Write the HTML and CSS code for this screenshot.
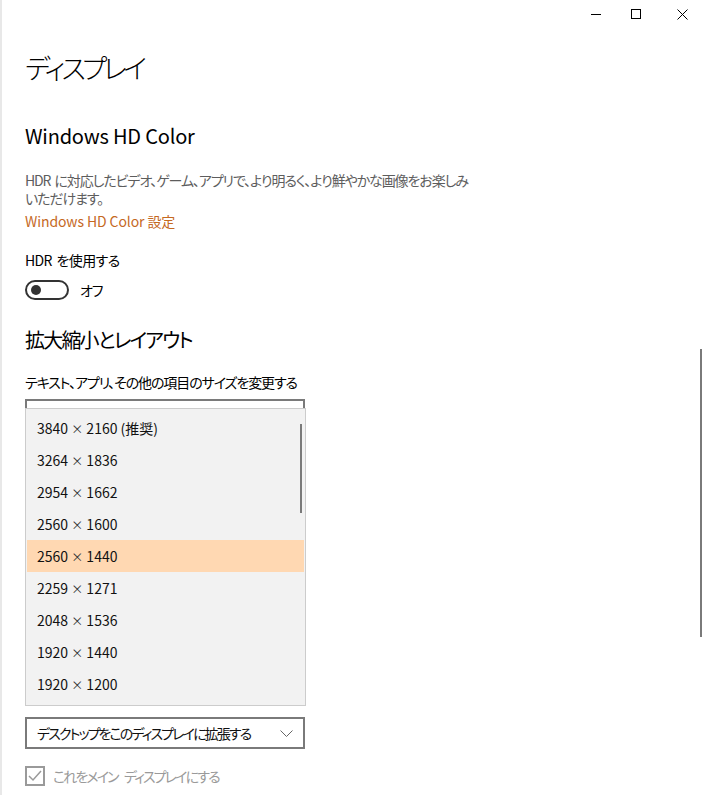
FILE: index.html
```html
<!DOCTYPE html>
<html lang="ja">
<head>
<meta charset="utf-8">
<title>ディスプレイ</title>
<link rel="stylesheet" href="styles.css">
</head>
<body>
<div class="window">
  <div class="titlebar">
    <div class="tb-btn tb-min"><svg width="10" height="10" viewBox="0 0 10 10"><path d="M0 5.5H10" stroke="#000" stroke-width="1"/></svg></div>
    <div class="tb-btn"><svg width="10" height="10" viewBox="0 0 10 10"><rect x="0.5" y="0.5" width="9" height="9" fill="none" stroke="#000" stroke-width="1"/></svg></div>
    <div class="tb-btn"><svg width="11" height="11" viewBox="0 0 11 11"><path d="M0.5 0.5L10.5 10.5M10.5 0.5L0.5 10.5" stroke="#000" stroke-width="1"/></svg></div>
  </div>
  <main class="content">
    <h1 class="page-title">ディスプレイ</h1>

    <h2 class="section-title sec-hdr">Windows HD Color</h2>
    <p class="desc">HDR に対応したビデオ、ゲーム、アプリで、より明るく、より鮮やかな画像をお楽しみいただけます。</p>
    <a class="link">Windows HD Color 設定</a>

    <div class="field-label hdr-label">HDR を使用する</div>
    <div class="toggle-row">
      <span class="toggle"><span class="knob"></span></span>
      <span class="toggle-text">オフ</span>
    </div>

    <h2 class="section-title sec-scale cjk-title">拡大縮小とレイアウト</h2>
    <div class="field-label scale-label">テキスト、アプリ、その他の項目のサイズを変更する</div>
    <div class="scale-field">
      <div class="combo combo-under"></div>
      <div class="popup">
        <ul class="popup-list">
          <li class="popup-item">3840 <span class="times">×</span> 2160 (推奨)</li>
          <li class="popup-item">3264 <span class="times">×</span> 1836</li>
          <li class="popup-item">2954 <span class="times">×</span> 1662</li>
          <li class="popup-item">2560 <span class="times">×</span> 1600</li>
          <li class="popup-item selected">2560 <span class="times">×</span> 1440</li>
          <li class="popup-item">2259 <span class="times">×</span> 1271</li>
          <li class="popup-item">2048 <span class="times">×</span> 1536</li>
          <li class="popup-item">1920 <span class="times">×</span> 1440</li>
          <li class="popup-item">1920 <span class="times">×</span> 1200</li>
        </ul>
        <div class="popup-thumb"></div>
      </div>
    </div>

    <div class="combo combo-multi">
      <span class="combo-text">デスクトップをこのディスプレイに拡張する</span>
      <svg class="chevron" width="13" height="7" viewBox="0 0 13 7"><path d="M0.5 0.5L6.5 6.5L12.5 0.5" fill="none" stroke="#666" stroke-width="1"/></svg>
    </div>

    <div class="check-row">
      <span class="checkbox"><svg width="16" height="16" viewBox="0 0 16 16"><path d="M2 8L6 12L14 3" fill="none" stroke="#9a9a9a" stroke-width="1.5"/></svg></span>
      <span class="check-text">これをメイン ディスプレイにする</span>
    </div>
  </main>
  <div class="page-scroll"></div>
</div>
</body>
</html>
```

FILE: styles.css
```css
* { box-sizing: border-box; }

html, body {
  margin: 0;
  padding: 0;
  background: #fff;
}

body {
  font-family: "Noto Sans CJK JP", "Noto Sans", sans-serif;
  font-feature-settings: "palt";
  color: #000;
  font-size: 14px;
  word-spacing: 2px;
  overflow: hidden;
}

.window {
  position: relative;
  height: 795px;
  border-left: 2px solid #e8e8e8;
}

.titlebar {
  height: 30px;
  display: flex;
  justify-content: flex-end;
  align-items: flex-start;
}

.tb-btn {
  width: 46px;
  height: 30px;
  display: flex;
  align-items: center;
  justify-content: center;
  padding-bottom: 2px;
}

.tb-min {
  width: 34px;
}

.content {
  padding-left: 23px;
}

.page-title {
  margin: 18px 0 0;
  font-size: 27px;
  font-weight: 300;
  line-height: 40px;
  letter-spacing: -3.8px;
}

.section-title {
  margin: 0;
  font-size: 20px;
  font-weight: 400;
  line-height: 28px;
  word-spacing: 0;
}

.cjk-title {
  letter-spacing: -1.8px;
}

.sec-hdr {
  margin-top: 34px;
  letter-spacing: -0.2px;
}

.desc {
  margin: 21px 0 0;
  width: 450px;
  color: #5d5d5d;
  line-height: 18px;
  letter-spacing: -1.1px;
}

.link {
  display: block;
  margin-top: 4px;
  line-height: 20px;
  color: #c5691f;
  letter-spacing: -0.1px;
  word-spacing: 0;
}

.field-label {
  line-height: 20px;
}

.hdr-label {
  margin-top: 19px;
  letter-spacing: -0.6px;
}

.toggle-row {
  margin-top: 10px;
  display: flex;
  align-items: center;
  gap: 11px;
  height: 20px;
}

.toggle {
  width: 44px;
  height: 20px;
  border: 2px solid #333;
  border-radius: 10px;
  display: flex;
  align-items: center;
  padding-left: 4px;
}

.knob {
  width: 10px;
  height: 10px;
  border-radius: 50%;
  background: #333;
}

.toggle-text {
  line-height: 20px;
  letter-spacing: -1px;
}

.sec-scale {
  margin-top: 26px;
}

.scale-label {
  margin-top: 18px;
  letter-spacing: -1.1px;
}

.scale-field {
  position: relative;
  margin-top: 7px;
  height: 318px;
  width: 280px;
}

.combo {
  width: 280px;
  height: 32px;
  border: 2px solid #7a7a7a;
}

.popup {
  position: absolute;
  top: 9px;
  left: 0;
  width: 281px;
  height: 298px;
  background: #f2f2f2;
  border: 1px solid #cccccc;
  padding: 3px 1px 4px;
}

.popup-list {
  list-style: none;
  margin: 0;
  padding: 0;
}

.popup-item {
  height: 32px;
  line-height: 32px;
  padding-left: 10px;
  color: #111;
  letter-spacing: 0;
  word-spacing: 0;
}

.times {
  font-size: 12px;
  color: #333;
}

.popup-item.selected {
  background: #ffd8b2;
}

.popup-thumb {
  position: absolute;
  top: 15px;
  right: 3px;
  width: 2px;
  height: 89px;
  background: #7a7a7a;
}

.combo-multi {
  display: flex;
  align-items: center;
  justify-content: space-between;
  padding: 0 10px 0 10px;
}

.combo-text {
  line-height: 20px;
  color: #111;
  letter-spacing: -1.9px;
  white-space: nowrap;
}

.chevron {
  display: block;
}

.check-row {
  margin-top: 17px;
  display: flex;
  align-items: center;
  gap: 8px;
}

.checkbox {
  width: 20px;
  height: 20px;
  border: 2px solid #9a9a9a;
  display: flex;
  align-items: center;
  justify-content: center;
}

.check-text {
  color: #9a9a9a;
  line-height: 20px;
  letter-spacing: -1.9px;
  word-spacing: 5px;
}

.page-scroll {
  position: absolute;
  left: 698px;
  top: 349px;
  width: 2px;
  height: 288px;
  background: #7a7a7a;
}
```
